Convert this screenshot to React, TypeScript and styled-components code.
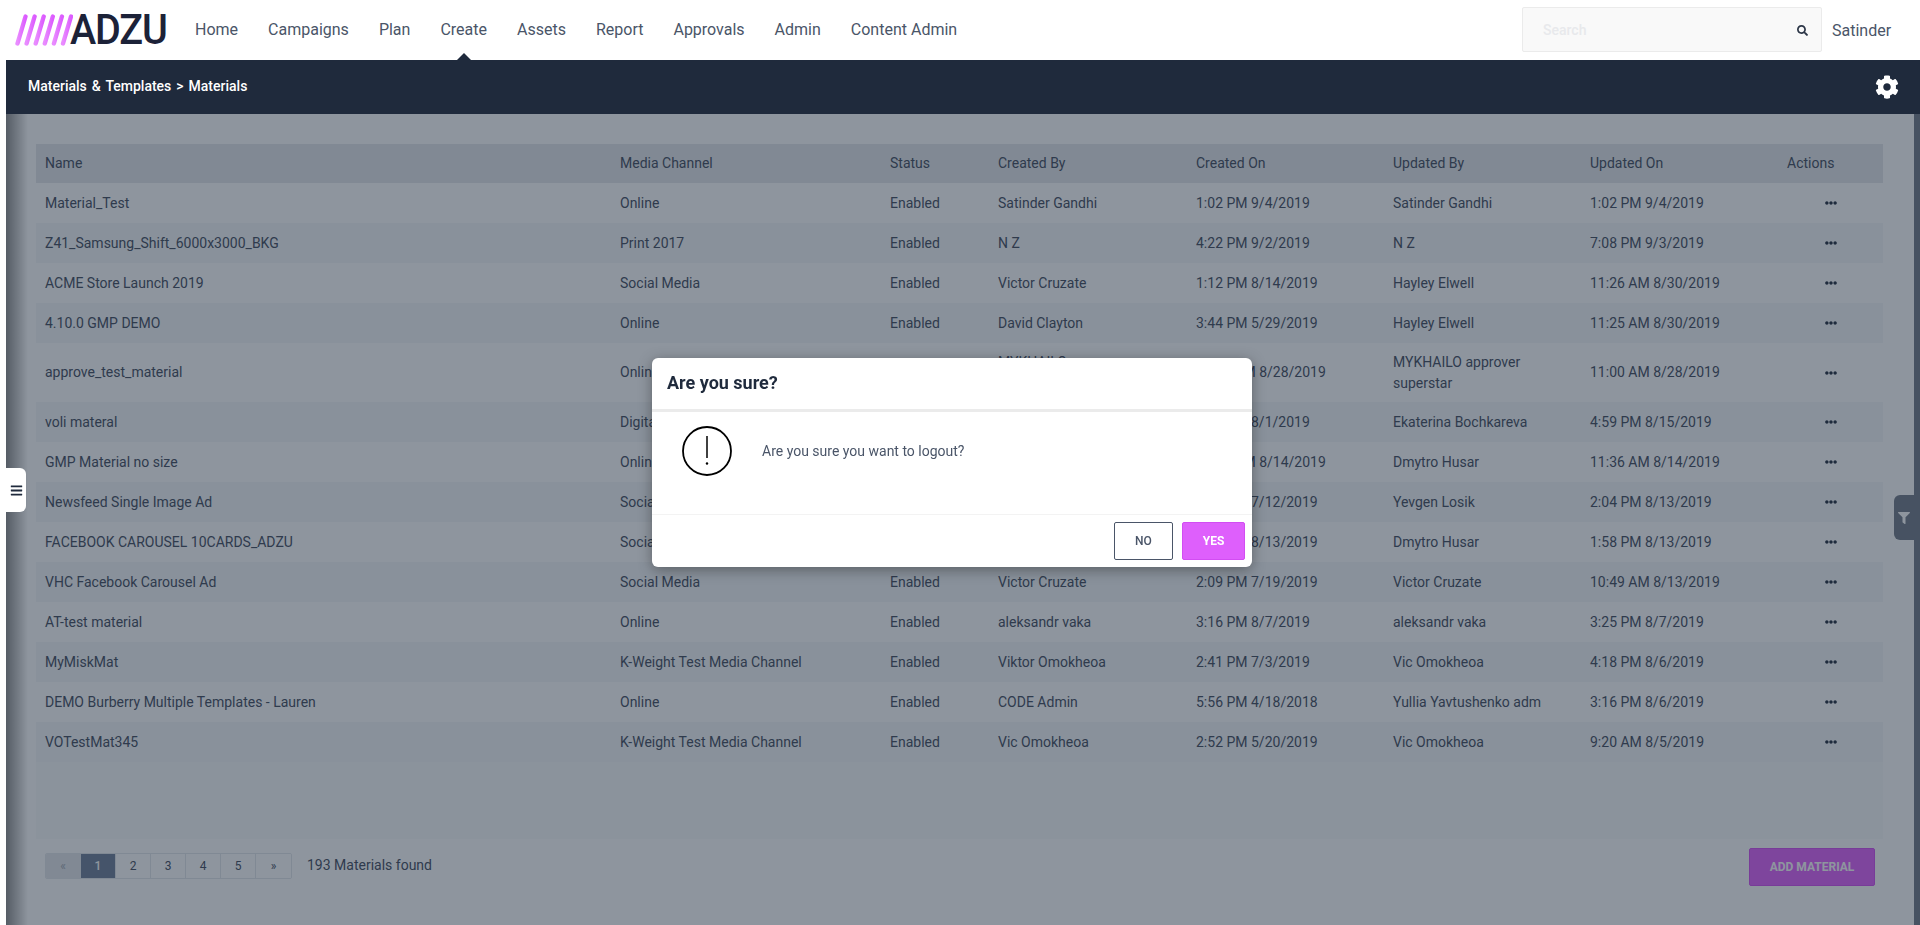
import React from "react";
import styled, { createGlobalStyle } from "styled-components";
import { FaBars, FaCog, FaEllipsisH, FaFilter, FaSearch } from "react-icons/fa";

const GlobalStyle = createGlobalStyle`
  html, body {
    margin: 0;
    height: 100%;
    background: #fff;
    overflow: hidden;
    font-family: Roboto, "Liberation Sans", sans-serif;
    color: #4a5568;
  }
  * {
    box-sizing: border-box;
  }
`;

const Page = styled.div`
  height: 925px;
  display: flex;
  flex-direction: column;
`;

const TopNav = styled.header`
  height: 60px;
  flex: none;
  display: flex;
  align-items: center;
  padding-left: 15px;
`;

const LogoWrap = styled.div`
  width: 180px;
  height: 60px;
  flex: none;
  display: flex;
  align-items: center;
`;

const LogoText = styled.span`
  font-size: 42px;
  font-weight: 500;
  line-height: 60px;
  color: #1c2238;
  letter-spacing: -1.2px;
  margin-left: -3px;
  transform: scaleX(0.94);
  transform-origin: left center;
`;

const NavLinks = styled.nav`
  display: flex;
  gap: 30px;
`;

const NavLink = styled.a<{ $active?: boolean }>`
  position: relative;
  font-size: 16px;
  line-height: 24px;
  color: #4a5568;

  ${(p) =>
    p.$active &&
    `
    &::after {
      content: "";
      position: absolute;
      left: 50%;
      bottom: -18px;
      margin-left: -7px;
      border-left: 7px solid transparent;
      border-right: 7px solid transparent;
      border-bottom: 7px solid #1f2a3c;
    }
  `}
`;

const SearchBox = styled.div`
  width: 300px;
  height: 45px;
  margin-left: auto;
  margin-top: -1px;
  display: flex;
  align-items: center;
  justify-content: space-between;
  padding: 0 13px 0 20px;
  background: #f9f9f9;
  border: 1px solid #ebebeb;
  border-radius: 2px;
  font-size: 14px;
  font-weight: 500;
  color: #e8e9ec;

  svg {
    font-size: 11px;
    color: #2d3748;
    margin-top: 1px;
  }
`;

const UserName = styled.span`
  width: 98px;
  padding-left: 10px;
  font-size: 16px;
  color: #4a5568;
`;

const Main = styled.main`
  flex: 1;
  margin-left: 6px;
  display: flex;
  flex-direction: column;
  min-height: 0;
`;

const Breadcrumb = styled.div`
  height: 54px;
  flex: none;
  display: flex;
  align-items: center;
  justify-content: space-between;
  padding: 0 21px 2px 22px;
  background: #1f2a3c;
  color: #fff;
  font-size: 14px;
  font-weight: 500;
  word-spacing: 1.5px;

  svg {
    font-size: 24px;
    margin-top: 1px;
  }
`;

const Body = styled.div`
  flex: 1;
  display: flex;
  min-height: 0;
`;

const Content = styled.section`
  flex: 1;
  padding: 30px 31px 0 30px;
  background: linear-gradient(90deg, rgba(0, 0, 0, 0.45), rgba(0, 0, 0, 0) 22px), #fff;
`;

const TablePanel = styled.div`
  height: 695px;
  background: #f9fbfb;
`;

const Table = styled.table`
  width: 100%;
  table-layout: fixed;
  border-collapse: collapse;
  font-size: 14px;
  line-height: 21px;
  color: #414a5c;
`;

const HeadRow = styled.tr`
  background: #e4e7ea;
`;

const HeadCell = styled.th<{ $width: number }>`
  width: ${(p) => p.$width}px;
  height: 39px;
  padding: 0 9px;
  font-weight: 400;
  text-align: left;
`;

const Row = styled.tr<{ $striped: boolean }>`
  background: ${(p) => (p.$striped ? "#f5f7f8" : "#ffffff")};
`;

const Cell = styled.td`
  height: 40px;
  padding: 8.5px 9px;
  vertical-align: middle;
`;

const ActionCell = styled(Cell)`
  text-align: center;
  color: #1f2a3c;

  svg {
    display: block;
    margin: 0 auto;
    font-size: 12px;
  }
`;

const Footer = styled.div`
  display: flex;
  align-items: center;
  justify-content: space-between;
  padding: 9px 8px 0 9px;
`;

const PagerGroup = styled.div`
  display: flex;
  align-items: center;
  gap: 15px;
  margin-top: -3px;
`;

const Pager = styled.div`
  display: flex;
  height: 26px;
  border: 1px solid #e2e6ea;
  border-radius: 2px;
  overflow: hidden;
`;

const PageItem = styled.span<{ $active?: boolean; $disabled?: boolean }>`
  width: 35px;
  display: flex;
  align-items: center;
  justify-content: center;
  font-size: 12px;
  font-weight: ${(p) => (p.$active ? 500 : 400)};
  color: ${(p) => (p.$active ? "#fff" : p.$disabled ? "#a0a6b0" : "#414a5c")};
  background: ${(p) =>
    p.$active ? "#6d7c96" : p.$disabled ? "#e4e7ea" : "#fff"};
  border-right: 1px solid #e2e6ea;

  &:last-child {
    border-right: none;
  }
`;

const FoundText = styled.span`
  font-size: 14px;
  margin-top: -2px;
  color: #414a5c;
`;

const AddButton = styled.button`
  width: 126px;
  height: 38px;
  padding: 0;
  background: #de5ffc;
  border: 1px solid #d24df2;
  border-radius: 2px;
  color: #fff;
  font-family: inherit;
  font-size: 12px;
  font-weight: 700;
`;

const SideStrip = styled.aside`
  position: relative;
  width: 6px;
  flex: none;
  background: #707986;
`;

const FilterTab = styled.div`
  position: absolute;
  right: 6px;
  top: 381px;
  width: 20px;
  height: 45px;
  display: flex;
  align-items: center;
  justify-content: center;
  border-radius: 6px 0 0 6px;
  background: #707986;
  color: #fff;

  svg {
    font-size: 12px;
  }
`;

const Overlay = styled.div`
  position: fixed;
  top: 114px;
  left: 6px;
  right: 0;
  bottom: 0;
  background: rgba(29, 43, 61, 0.5);
`;

const MenuToggle = styled.div`
  position: fixed;
  top: 468px;
  left: 6px;
  width: 20px;
  height: 44px;
  display: flex;
  align-items: center;
  justify-content: center;
  background: #fff;
  border-radius: 0 6px 6px 0;
  color: #1f2a3c;

  svg {
    font-size: 13px;
  }
`;

const Dialog = styled.div`
  position: fixed;
  top: 358px;
  left: 652px;
  width: 600px;
  height: 209px;
  display: flex;
  flex-direction: column;
  background: #fff;
  border-radius: 6px;
  box-shadow: 0 3px 14px rgba(0, 0, 0, 0.35);
`;

const DialogHeader = styled.div`
  height: 54px;
  flex: none;
  display: flex;
  align-items: center;
  padding: 0 15px 2px;
  border-bottom: 3px solid #ebebeb;
  font-size: 18px;
  font-weight: 700;
  color: #1f2a3c;
`;

const DialogBody = styled.div`
  flex: 1;
  display: flex;
  align-items: flex-start;
  gap: 30px;
  padding: 14px 30px;
  font-size: 14px;
  color: #4a5568;
`;

const DialogMessage = styled.p`
  margin: 15px 0 0;
  line-height: 21px;
`;

const DialogFooter = styled.div`
  height: 53px;
  flex: none;
  display: flex;
  justify-content: flex-end;
  gap: 9px;
  padding: 7px 7px 0 0;
  border-top: 1px solid #f3f3f3;
`;

const DialogButton = styled.button<{ $primary?: boolean }>`
  width: ${(p) => (p.$primary ? 63 : 59)}px;
  height: 38px;
  padding: 0;
  background: ${(p) => (p.$primary ? "#de5ffc" : "#fff")};
  border: 1px solid ${(p) => (p.$primary ? "#d24df2" : "#4a5568")};
  border-radius: 2px;
  color: ${(p) => (p.$primary ? "#fff" : "#4a5568")};
  font-family: inherit;
  font-size: 12px;
  font-weight: ${(p) => (p.$primary ? 700 : 500)};
`;

const columns = [
  { name: "Name", width: 575 },
  { name: "Media Channel", width: 270 },
  { name: "Status", width: 108 },
  { name: "Created By", width: 198 },
  { name: "Created On", width: 197 },
  { name: "Updated By", width: 197 },
  { name: "Updated On", width: 197 },
  { name: "Actions", width: 105 },
];

const rows = [
  ["Material_Test", "Online", "Enabled", "Satinder Gandhi", "1:02 PM 9/4/2019", "Satinder Gandhi", "1:02 PM 9/4/2019"],
  ["Z41_Samsung_Shift_6000x3000_BKG", "Print 2017", "Enabled", "N Z", "4:22 PM 9/2/2019", "N Z", "7:08 PM 9/3/2019"],
  ["ACME Store Launch 2019", "Social Media", "Enabled", "Victor Cruzate", "1:12 PM 8/14/2019", "Hayley Elwell", "11:26 AM 8/30/2019"],
  ["4.10.0 GMP DEMO", "Online", "Enabled", "David Clayton", "3:44 PM 5/29/2019", "Hayley Elwell", "11:25 AM 8/30/2019"],
  ["approve_test_material", "Online", "Enabled", "MYKHAILO approver superstar", "10:58 AM 8/28/2019", "MYKHAILO approver superstar", "11:00 AM 8/28/2019"],
  ["voli materal", "Digital", "Enabled", "Ekaterina Bochkareva", "4:57 PM 8/1/2019", "Ekaterina Bochkareva", "4:59 PM 8/15/2019"],
  ["GMP Material no size", "Online", "Enabled", "Dmytro Husar", "11:31 AM 8/14/2019", "Dmytro Husar", "11:36 AM 8/14/2019"],
  ["Newsfeed Single Image Ad", "Social Media", "Enabled", "Yevgen Losik", "3:06 PM 7/12/2019", "Yevgen Losik", "2:04 PM 8/13/2019"],
  ["FACEBOOK CAROUSEL 10CARDS_ADZU", "Social Media", "Enabled", "Dmytro Husar", "1:53 PM 8/13/2019", "Dmytro Husar", "1:58 PM 8/13/2019"],
  ["VHC Facebook Carousel Ad", "Social Media", "Enabled", "Victor Cruzate", "2:09 PM 7/19/2019", "Victor Cruzate", "10:49 AM 8/13/2019"],
  ["AT-test material", "Online", "Enabled", "aleksandr vaka", "3:16 PM 8/7/2019", "aleksandr vaka", "3:25 PM 8/7/2019"],
  ["MyMiskMat", "K-Weight Test Media Channel", "Enabled", "Viktor Omokheoa", "2:41 PM 7/3/2019", "Vic Omokheoa", "4:18 PM 8/6/2019"],
  ["DEMO Burberry Multiple Templates - Lauren", "Online", "Enabled", "CODE Admin", "5:56 PM 4/18/2018", "Yullia Yavtushenko adm", "3:16 PM 8/6/2019"],
  ["VOTestMat345", "K-Weight Test Media Channel", "Enabled", "Vic Omokheoa", "2:52 PM 5/20/2019", "Vic Omokheoa", "9:20 AM 8/5/2019"],
];

const navItems = ["Home", "Campaigns", "Plan", "Create", "Assets", "Report", "Approvals", "Admin", "Content Admin"];

const LogoStripes: React.FC = () => (
  <svg width="58" height="32" viewBox="0 0 58 32" fill="none">
    <defs>
      <linearGradient id="stripes" x1="0" y1="0" x2="1" y2="0">
        <stop offset="0" stopColor="#e98cff" />
        <stop offset="1" stopColor="#dc5cff" />
      </linearGradient>
    </defs>
    {[0, 1, 2, 3, 4, 5].map((i) => (
      <line
        key={i}
        x1={2.5 + i * 9.1}
        y1={29.5}
        x2={10.5 + i * 9.1}
        y2={2.5}
        stroke="url(#stripes)"
        strokeWidth="4.4"
        strokeLinecap="round"
      />
    ))}
  </svg>
);

const WarningIcon: React.FC = () => (
  <svg width="50" height="50" viewBox="0 0 50 50" fill="none">
    <circle cx="25" cy="25" r="24" stroke="#000" strokeWidth="1.8" />
    <line x1="25" y1="10" x2="25" y2="32" stroke="#000" strokeWidth="1.5" />
    <circle cx="25" cy="37.5" r="1.2" fill="#000" />
  </svg>
);

const App: React.FC = () => {
  return (
    <Page>
      <GlobalStyle />
      <TopNav>
        <LogoWrap>
          <LogoStripes />
          <LogoText>ADZU</LogoText>
        </LogoWrap>
        <NavLinks>
          {navItems.map((item) => (
            <NavLink key={item} $active={item === "Create"}>
              {item}
            </NavLink>
          ))}
        </NavLinks>
        <SearchBox>
          <span>Search</span>
          <FaSearch />
        </SearchBox>
        <UserName>Satinder</UserName>
      </TopNav>
      <Main>
        <Breadcrumb>
          <span>Materials &amp; Templates &gt; Materials</span>
          <FaCog />
        </Breadcrumb>
        <Body>
          <Content>
            <TablePanel>
              <Table>
                <thead>
                  <HeadRow>
                    {columns.map((col) => (
                      <HeadCell key={col.name} $width={col.width}>
                        {col.name}
                      </HeadCell>
                    ))}
                  </HeadRow>
                </thead>
                <tbody>
                  {rows.map((row, i) => (
                    <Row key={row[0]} $striped={i % 2 === 1}>
                      {row.map((value, j) => (
                        <Cell key={j}>{value}</Cell>
                      ))}
                      <ActionCell>
                        <FaEllipsisH />
                      </ActionCell>
                    </Row>
                  ))}
                </tbody>
              </Table>
            </TablePanel>
            <Footer>
              <PagerGroup>
                <Pager>
                  <PageItem $disabled>«</PageItem>
                  <PageItem $active>1</PageItem>
                  <PageItem>2</PageItem>
                  <PageItem>3</PageItem>
                  <PageItem>4</PageItem>
                  <PageItem>5</PageItem>
                  <PageItem>»</PageItem>
                </Pager>
                <FoundText>193 Materials found</FoundText>
              </PagerGroup>
              <AddButton>ADD MATERIAL</AddButton>
            </Footer>
          </Content>
          <SideStrip>
            <FilterTab>
              <FaFilter />
            </FilterTab>
          </SideStrip>
        </Body>
      </Main>
      <Overlay />
      <MenuToggle>
        <FaBars />
      </MenuToggle>
      <Dialog>
        <DialogHeader>Are you sure?</DialogHeader>
        <DialogBody>
          <WarningIcon />
          <DialogMessage>Are you sure you want to logout?</DialogMessage>
        </DialogBody>
        <DialogFooter>
          <DialogButton>NO</DialogButton>
          <DialogButton $primary>YES</DialogButton>
        </DialogFooter>
      </Dialog>
    </Page>
  );
};

export default App;
